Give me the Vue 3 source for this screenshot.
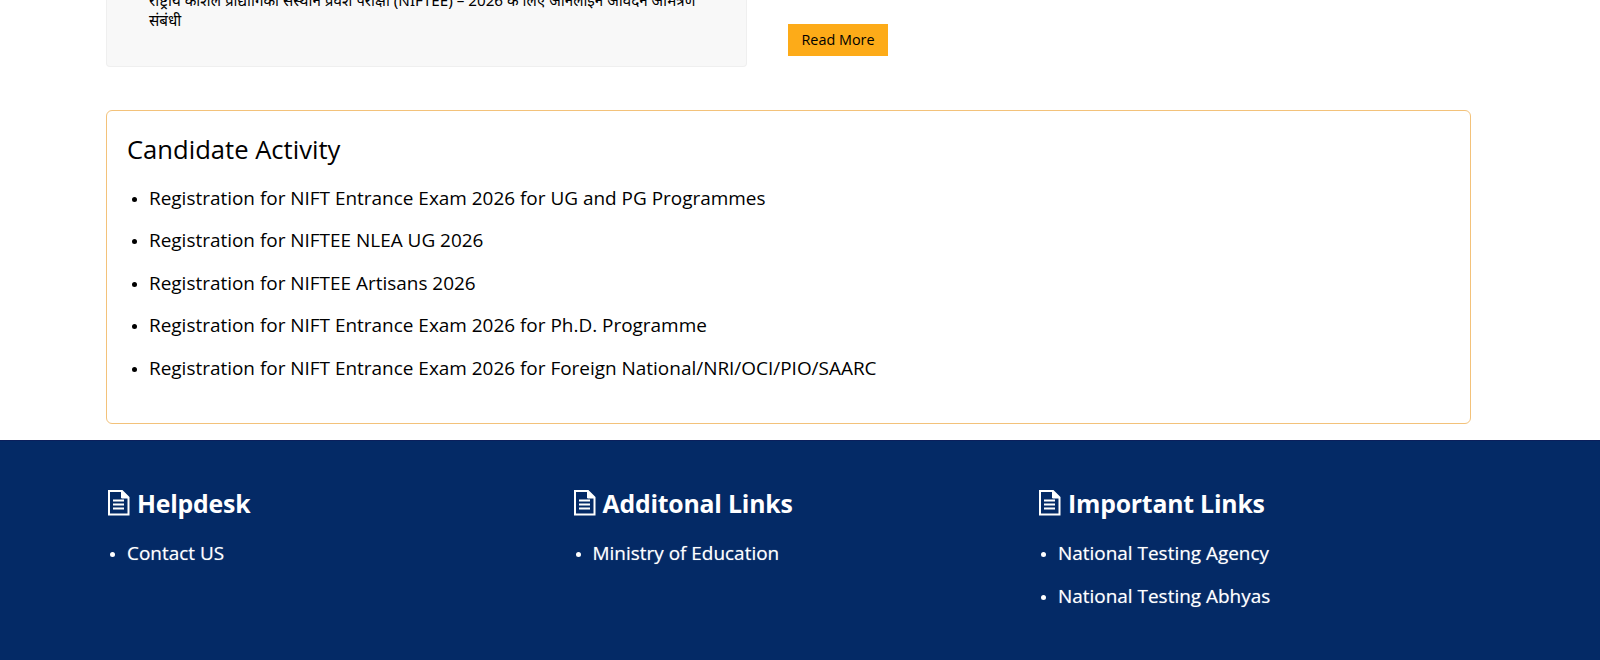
<script setup>
const activities = [
  'Registration for NIFT Entrance Exam 2026 for UG and PG Programmes',
  'Registration for NIFTEE NLEA UG 2026',
  'Registration for NIFTEE Artisans 2026',
  'Registration for NIFT Entrance Exam 2026 for Ph.D. Programme',
  'Registration for NIFT Entrance Exam 2026 for Foreign National/NRI/OCI/PIO/SAARC'
]
const columns = [
  { title: 'Helpdesk', links: ['Contact US'] },
  { title: 'Additonal Links', links: ['Ministry of Education'] },
  { title: 'Important Links', links: ['National Testing Agency', 'National Testing Abhyas'] }
]
</script>

<template>
  <div class="page">
    <div class="top">
      <div class="notice">
        <p>राष्ट्रीय कौशल प्रौद्योगिकी संस्थान प्रवेश परीक्षा (NIFTEE) – 2026 के लिए ऑनलाइन आवेदन आमंत्रण संबंधी</p>
      </div>
      <div class="more"><a class="btn">Read More</a></div>
    </div>
    <section class="activity">
      <h2>Candidate Activity</h2>
      <ul>
        <li v-for="a in activities" :key="a">{{ a }}</li>
      </ul>
    </section>
    <footer class="footer">
      <div v-for="c in columns" :key="c.title" class="col">
        <h3>
          <svg class="doc" width="22" height="26" viewBox="0 0 22 26" fill="none" stroke="#fff" stroke-width="2">
            <path d="M1 1h13l6.5 6.5V24.500H1z" />
            <path d="M13.500 1.500V8H20.500z" fill="#fff" stroke-width="1" />
            <path d="M5 10.500h11M5 14.500h11M5 18.500h11" />
          </svg>
          {{ c.title }}
        </h3>
        <ul>
          <li v-for="l in c.links" :key="l">{{ l }}</li>
        </ul>
      </div>
    </footer>
  </div>
</template>

<style>
html, body { margin: 0; background: #fff; overflow: hidden; }
</style>
<style scoped>
.page { height: 660px; overflow: hidden; font-family: "Open Sans", "Noto Sans", sans-serif; color: #000; }
.top { display: flex; height: 67px; padding-left: 106px; gap: 41px; margin-bottom: 43px; }
.notice { width: 641px; box-sizing: border-box; height: 67px; background: #f8f8f8; border: 1px solid #efefef; border-top: 0; border-radius: 0 0 4px 4px; padding: 0 44px 0 42px; overflow: hidden; }
.notice p { margin: -10px 0 0; font-size: 15.2px; line-height: 20px; font-family: "Noto Sans", sans-serif; }
.more { padding-top: 24px; }
.btn { display: block; width: 100px; height: 32px; line-height: 32px; text-align: center; background: #fdab18; font-size: 14.4px; }
.activity { margin: 0 129px 16px 106px; height: 314px; box-sizing: border-box; border: 1px solid #f3c27a; border-radius: 6px; padding: 19px 20px; }
h2 { margin: 0 0 14.700px; font-size: 25.6px; font-weight: 400; line-height: 39px; }
.activity ul { margin: 0; padding-left: 22px; }
.activity li { font-size: 18.95px; line-height: 28.5px; margin-bottom: 14px; }
.activity li::marker, .footer li::marker { font-size: 14px; }
.footer { background: #042a66; border-top: 1px solid #0b1f5c; color: #fff; height: 220px; display: flex; padding: 42px 0 0 107px; box-sizing: border-box; }
.col { width: 465.5px; }
.doc { flex: none; margin-left: 1px; }
h3 { display: flex; align-items: center; gap: 7px; margin: 2px 0 18px; font-size: 24.8px; font-weight: 700; letter-spacing: -0.2px; line-height: 36px; }
.footer ul { margin: 0; padding-left: 20px; }
.footer li { font-size: 18.95px; line-height: 28.5px; margin-bottom: 14px; text-shadow: 0 0 1px rgba(255,255,255,.5); }
</style>
